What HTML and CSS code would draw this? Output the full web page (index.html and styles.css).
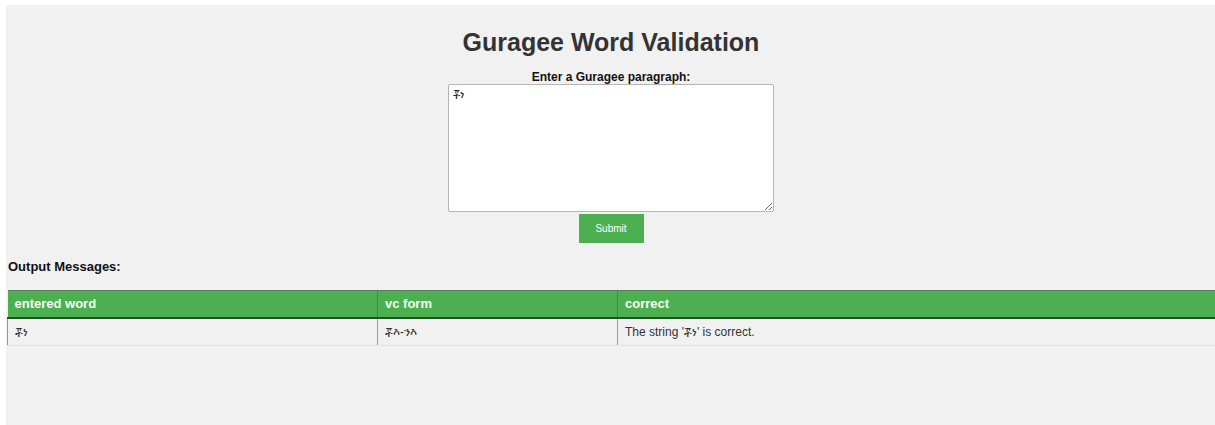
FILE: index.html
```html
<!DOCTYPE html>
<html lang="en">
<head>
<meta charset="utf-8">
<title>Guragee Word Validation</title>
<link rel="stylesheet" href="styles.css">
</head>
<body>
<div class="page">
  <h1 class="title">Guragee Word Validation</h1>
  <form class="entry">
    <label class="entry-label" for="para">Enter a Guragee paragraph:</label>
    <textarea id="para" class="entry-text">ቾነ</textarea>
    <button type="button" class="submit">Submit</button>
  </form>
  <h2 class="out-title">Output Messages:</h2>
  <table class="results">
    <colgroup>
      <col class="c1"><col class="c2"><col class="c3">
    </colgroup>
    <thead>
      <tr><th>entered word</th><th>vc form</th><th>correct</th></tr>
    </thead>
    <tbody>
      <tr><td>ቾነ</td><td>ቾእ-ንእ</td><td>The string 'ቾነ' is correct.</td></tr>
    </tbody>
  </table>
</div>
</body>
</html>
```
FILE: styles.css
```css
html, body {
  margin: 0;
  padding: 0;
  background: #ffffff;
}

body {
  font-family: "Liberation Sans", Arial, "Noto Sans", "DejaVu Sans", sans-serif;
  color: #222;
  height: 425px;
  overflow: hidden;
}

.page {
  margin: 5px 0 0 6px;
  height: 420px;
  background: #f1f1f1;
  border-top-left-radius: 4px;
  padding: 1px 0 0 1px;
  box-sizing: border-box;
}

.title {
  margin: 22px 0 0;
  text-align: center;
  font-size: 25px;
  line-height: 28px;
  font-weight: bold;
  color: #333;
}

.entry {
  display: flex;
  flex-direction: column;
  align-items: center;
  margin-top: 15px;
}

.entry-label {
  font-size: 12px;
  line-height: 13px;
  font-weight: bold;
  color: #111;
}

.entry-text {
  width: 326px;
  height: 128px;
  margin: 0;
  box-sizing: border-box;
  border: 1px solid #b5b5b5;
  border-radius: 2px;
  background: #fff;
  padding: 3px 4px;
  font-family: "DejaVu Sans", "Noto Sans", sans-serif;
  font-size: 11px;
  color: #222;
  resize: both;
}

.submit {
  margin: 2px 0 0;
  width: 65px;
  height: 29px;
  border: none;
  background: #4caf50;
  color: #fff;
  font-family: "Liberation Sans", Arial, sans-serif;
  font-size: 10px;
  padding: 0;
}

.out-title {
  margin: 16px 0 0 1px;
  font-size: 13px;
  line-height: 16px;
  font-weight: bold;
  color: #111;
}

.results {
  margin-top: 15px;
  width: 100%;
  border-collapse: collapse;
  table-layout: fixed;
  font-size: 13px;
}

.c1 { width: 370px; }
.c2 { width: 240px; }

.results th {
  background: #4caf50;
  color: #f4fff4;
  text-align: left;
  font-weight: bold;
  height: 27px;
  padding: 0 7px;
  border-top: 1px solid #5c7d5c;
  border-bottom: 2px solid #1f4f22;
  border-left: 1px solid #3f8f43;
  box-sizing: border-box;
}

.results th:first-child {
  border-left: none;
}

.results td {
  height: 28px;
  padding: 0 7px;
  color: #333;
  font-size: 12px;
  font-family: "Liberation Sans", Arial, "DejaVu Sans", sans-serif;
  border-left: 1px solid #9a9a9a;
  border-bottom: 1px solid #e3e3e3;
  box-sizing: border-box;
}
```
